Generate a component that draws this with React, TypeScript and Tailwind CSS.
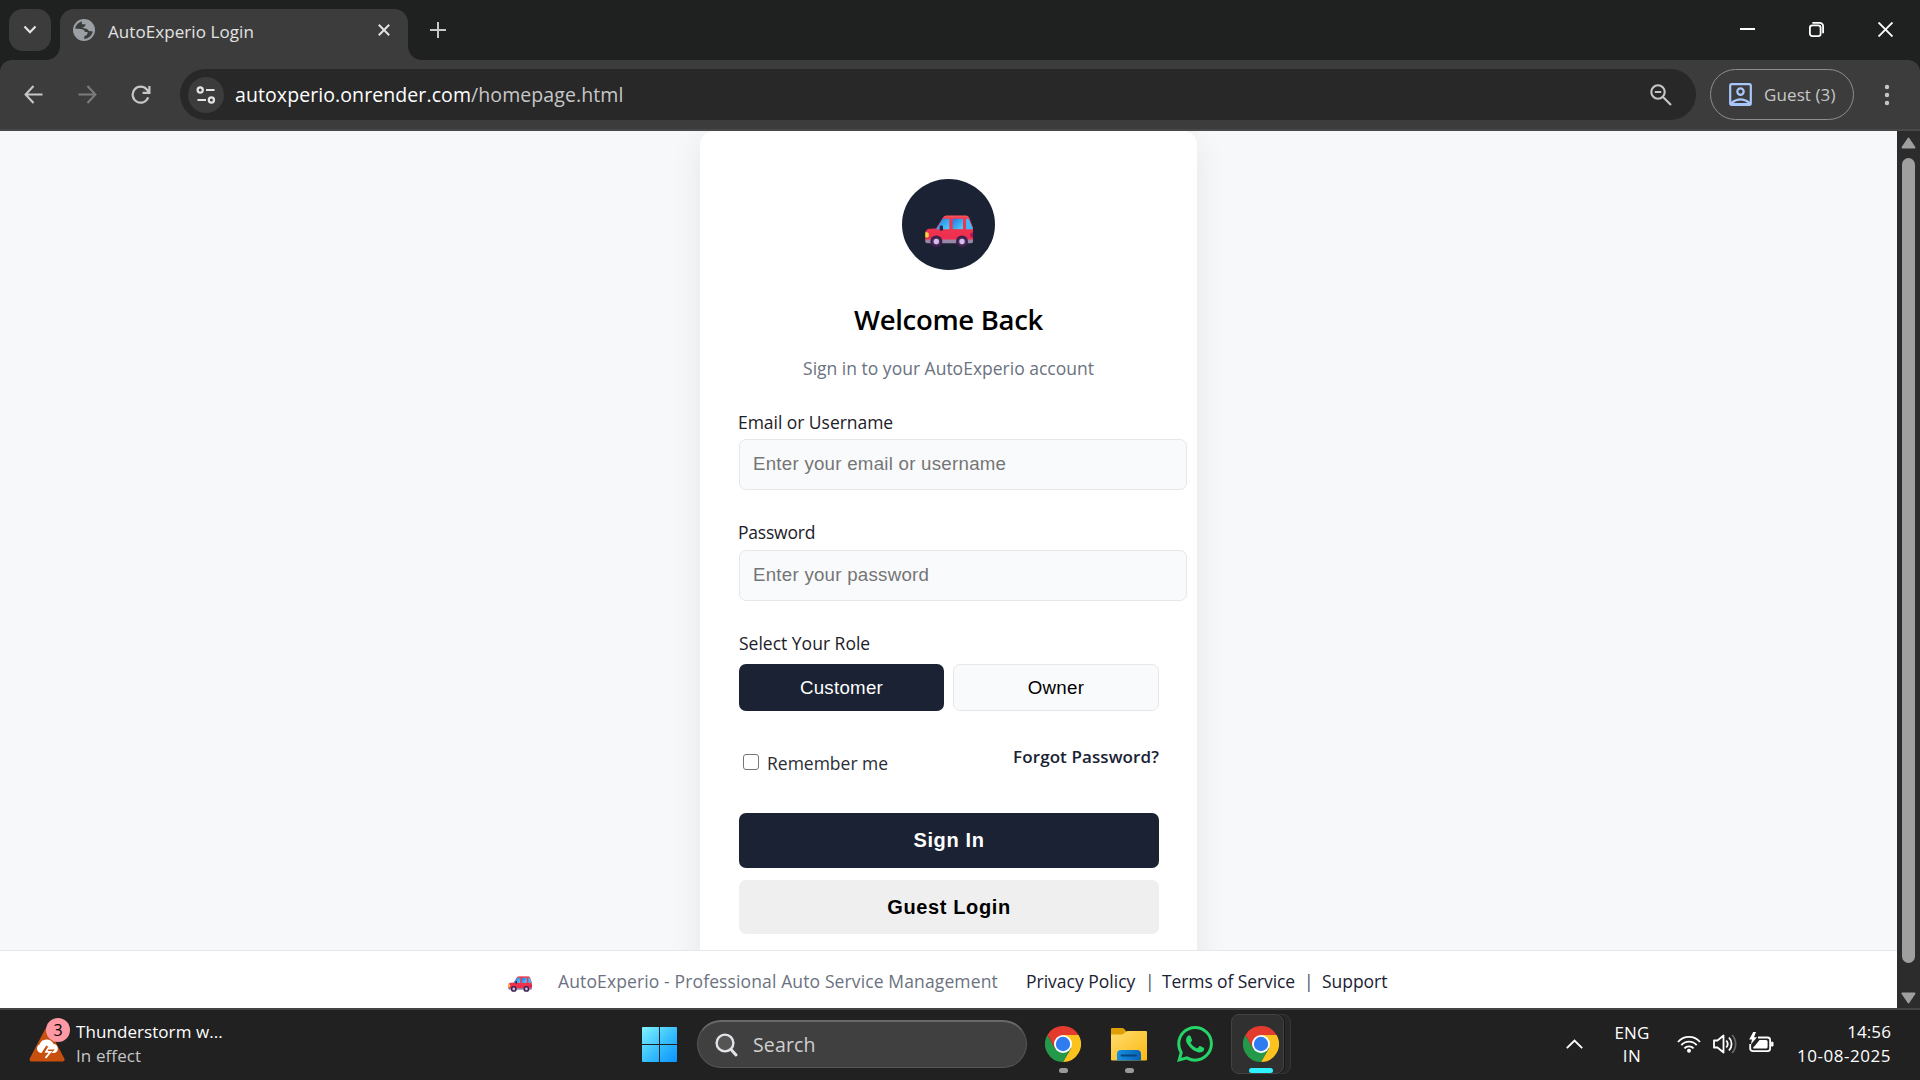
import React from 'react';

const SANS = "font-['Open_Sans','Noto_Sans',sans-serif]";
const ARIAL = "font-['Liberation_Sans',Arial,sans-serif]";

function Car({ className }: { className: string }) {
  return (
    <svg viewBox="0 0 144 98" className={className}>
      <defs>
        <linearGradient id="glass" x1="0" y1="0" x2="1" y2="1">
          <stop offset="0" stopColor="#2079e4" />
          <stop offset="1" stopColor="#52d2ff" />
        </linearGradient>
        <linearGradient id="paint" x1="0" y1="0" x2="0" y2="1">
          <stop offset="0" stopColor="#fb5a5e" />
          <stop offset="0.12" stopColor="#f0394e" />
          <stop offset="1" stopColor="#ee2c50" />
        </linearGradient>
      </defs>
      <path d="M64 1H122Q130 1 133 8L144 38V80H1V54Q1 43 13 41L33 40L54 7Q58 1 64 1Z" fill="url(#paint)" />
      <path d="M56 11H73V42H34L50 15Q52 11 56 11Z" fill="url(#glass)" />
      <path d="M83 11H114V42H83Z" fill="url(#glass)" />
      <path d="M123 11H129Q131 11 132 14L143 38V42H123Z" fill="#45b7f7" />
      <rect x="44" y="31" width="10" height="16" rx="4" fill="#2a2547" />
      <path d="M1 51H6Q12 52 12 59Q12 67 6 67H1Z" fill="#ffd83b" />
      <path d="M144 52H141Q135 54 135 60Q135 66 141 67H144Z" fill="#b3125f" />
      <path d="M1 73H144V80Q144 84 138 84H7Q1 84 1 78Z" fill="#9a86a8" />
      <circle cx="34" cy="79" r="18" fill="#3a1f49" />
      <circle cx="111" cy="79" r="18" fill="#3a1f49" />
      <circle cx="34" cy="79" r="12" fill="#4c355c" />
      <circle cx="111" cy="79" r="12" fill="#4c355c" />
      <circle cx="34" cy="79" r="8" fill="#d8bdee" />
      <circle cx="111" cy="79" r="8" fill="#d8bdee" />
    </svg>
  );
}

function Chrome() {
  return (
    <svg viewBox="0 0 48 48" className="block h-9 w-9">
      <path d="M24 24L3.2 12A24 24 0 0 1 44.8 12Z" fill="#e33b2e" />
      <path d="M24 12H44.8A24 24 0 0 1 24 48L34.4 30Z" fill="#fcc31e" />
      <path d="M13.6 30L3.2 12A24 24 0 0 0 24 48L34.4 30L24 30Z" fill="#25994a" />
      <path d="M3.2 12L13.6 30L24 24V12Z" fill="#e33b2e" />
      <circle cx="24" cy="24" r="12" fill="#fff" />
      <circle cx="24" cy="24" r="9.6" fill="#2f7cf0" />
    </svg>
  );
}

function TabStrip() {
  return (
    <div className="flex h-[60px] shrink-0 items-start bg-[#1f2120] pt-[9px]">
      <div className="ml-[9px] flex h-[42px] w-[42px] items-center justify-center rounded-[14px] bg-[#3c3c3c]">
        <svg width="14" height="10" viewBox="0 0 14 10" fill="none" stroke="#e3e3e3" strokeWidth="2.2"><path d="M1.5 1.5L7 7.2L12.5 1.5" /></svg>
      </div>
      <div className="relative ml-[9px] flex h-[51px] w-[348px] items-start rounded-t-[14px] bg-[#3c3c3c]">
        <svg className="absolute -left-[14px] bottom-0" width="14" height="14"><path d="M14 0V14H0A14 14 0 0 0 14 0Z" fill="#3c3c3c" /></svg>
        <svg className="absolute -right-[14px] bottom-0" width="14" height="14"><path d="M0 0V14H14A14 14 0 0 1 0 0Z" fill="#3c3c3c" /></svg>
        <svg className="mt-[10px] ml-[13px]" width="22" height="22" viewBox="0 0 22 22">
          <circle cx="11" cy="11" r="10" fill="#3c3c3c" stroke="#9aa0a6" strokeWidth="2" />
          <path d="M1.5 9.5L8 10Q11.5 10.5 12 13H14.5Q15 16.5 11.5 17L11 20.5A10 10 0 0 1 1.2 10Z" fill="#9aa0a6" />
          <path d="M9.5 1.2Q8 3.5 9.2 5.2H12.5Q12.5 8.2 9 8.4L11 9.3Q14.5 9.5 16 12L20.6 12.5A10 10 0 0 0 9.5 1.2Z" fill="#9aa0a6" />
        </svg>
        <span className={`${SANS} mt-[11px] ml-[13px] w-[270px] shrink-0 text-[17px] leading-6 tracking-[0.07px] whitespace-nowrap text-[#e3e3e3]`}>AutoExperio Login</span>
        <svg className="mt-[15px] shrink-0" width="12" height="12" viewBox="0 0 12 12" stroke="#e3e3e3" strokeWidth="2"><path d="M0.8 0.8L11.2 11.2M11.2 0.8L0.8 11.2" /></svg>
      </div>
      <svg className="mt-[13px] ml-[22px]" width="16" height="16" viewBox="0 0 16 16" stroke="#c7c7c7" strokeWidth="2"><path d="M8 0V16M0 8H16" /></svg>
      <div className="mt-[13px] mr-[27px] ml-auto flex gap-[54px]">
        <svg width="15" height="15" stroke="#fff" strokeWidth="2"><path d="M0 7H15" /></svg>
        <svg width="15" height="15" viewBox="0 0 15 15" fill="none" stroke="#fff" strokeWidth="1.8"><rect x="0.9" y="3.4" width="10.7" height="10.7" rx="2.4" /><path d="M3.4 0.9H10.4Q14.1 0.9 14.1 4.6V11.2" /></svg>
        <svg width="15" height="15" viewBox="0 0 15 15" stroke="#fff" strokeWidth="1.9"><path d="M0.5 0.5L14.5 14.5M14.5 0.5L0.5 14.5" /></svg>
      </div>
    </div>
  );
}

function Toolbar() {
  return (
    <div className="h-[71px] shrink-0 bg-[#1f2120]">
      <div className="flex h-[71px] items-start rounded-t-[12px] border-b-2 border-[#484848] bg-[#3c3c3c] pt-[9px]">
        <div className="flex h-[51px] items-center">
          <svg className="ml-6" width="19" height="19" viewBox="0 0 19 19" fill="none" stroke="#c7c7c7" strokeWidth="2.1"><path d="M9.5 1L1.6 9.5L9.5 18M1.6 9.5H18.5" /></svg>
          <svg className="ml-[35px]" width="19" height="19" viewBox="0 0 19 19" fill="none" stroke="#7b7b7b" strokeWidth="2.1"><path d="M9.5 1L17.4 9.5L9.5 18M17.4 9.5H0.5" /></svg>
          <svg className="ml-[34px]" width="20" height="20" viewBox="0 0 20 20" fill="none" stroke="#c7c7c7" strokeWidth="2.2"><path d="M17.2 12.4A8 8 0 1 1 15.8 4.5L18 7M18.4 1V7.8H11.6" /></svg>
        </div>
        <div className="ml-[29px] flex h-[51px] w-[1516px] items-center rounded-full bg-[#282828]">
          <div className="ml-2 flex h-9 w-9 items-center justify-center rounded-full bg-[#3c3c3c]">
            <svg width="20" height="18" viewBox="0 0 20 18" fill="none" stroke="#e3e3e3" strokeWidth="2.2"><circle cx="4.2" cy="4" r="2.6" /><path d="M10 4H18.5M1.5 14H10" /><circle cx="15.4" cy="14" r="2.6" /></svg>
          </div>
          <span className={`${SANS} ml-[11px] text-[19.5px] leading-[30px] tracking-[0.089px] whitespace-nowrap text-[#c7c7c7]`}><span className="text-white">autoxperio.onrender.com</span>/homepage.html</span>
          <svg className="mr-6 ml-auto" width="22" height="22" viewBox="0 0 22 22" fill="none" stroke="#c7c7c7" strokeWidth="2.1"><circle cx="8" cy="8" r="6.7" /><path d="M13 13L21 21M4.8 8H11.2" /></svg>
        </div>
        <div className="ml-[14px] flex h-[51px] w-[144px] items-center rounded-full border border-[#8e8e8e]">
          <svg className="ml-[18px]" width="23" height="23" viewBox="0 0 23 23" fill="none" stroke="#a8c7fa" strokeWidth="2.2"><rect x="1.2" y="1.2" width="20.6" height="20.6" rx="1.5" /><circle cx="11.5" cy="8.6" r="3.2" /><path d="M2.5 19.8Q11.5 12.8 20.5 19.8V21H2.5Z" /></svg>
          <span className={`${SANS} ml-3 text-[17px] leading-6 tracking-[0.1px] whitespace-nowrap text-[#c7c7c7]`}>Guest (3)</span>
        </div>
        <svg className="mt-[14px] ml-[30px]" width="6" height="24" fill="#c7c7c7"><circle cx="3" cy="4" r="2.2" /><circle cx="3" cy="12" r="2.2" /><circle cx="3" cy="20" r="2.2" /></svg>
      </div>
    </div>
  );
}

function Field({ placeholder, type }: { placeholder: string; type: string }) {
  return (
    <input type={type} placeholder={placeholder} className={`${ARIAL} block h-[51px] w-[448px] rounded-[7px] border border-[#e5e7eb] bg-[#f9fafc] px-[13px] pb-px text-[18.7px] tracking-[0.253px] placeholder:text-[#757575]`} />
  );
}

function LoginCard() {
  const label = `${SANS} -ml-px block h-6 text-[17.5px] leading-6 whitespace-nowrap text-[#1c2028]`;
  return (
    <div className="mx-auto flex h-[900px] w-[497px] flex-col rounded-[14px] bg-white px-[39px] pt-12 shadow-[0_8px_32px_rgba(0,0,0,0.08)]">
      <div className="mx-auto flex h-[91px] w-[93px] shrink-0 items-start justify-center rounded-[50%] bg-[#1a2233]">
        <Car className="mt-9 h-[33px] w-12" />
      </div>
      <h1 className={`${SANS} mt-[30px] h-10 text-center text-[27.5px] leading-10 font-semibold tracking-[-0.3px] whitespace-nowrap text-black`}>Welcome Back</h1>
      <p className={`${SANS} mt-4 h-6 text-center text-[17.5px] leading-6 whitespace-nowrap text-[#6b7280]`}>Sign in to your AutoExperio account</p>
      <label className={`${label} mt-[30px] mb-[5px] tracking-[-0.043px]`}>Email or Username</label>
      <Field type="text" placeholder="Enter your email or username" />
      <label className={`${label} mt-[30px] mb-1.5 tracking-[-0.21px]`}>Password</label>
      <Field type="password" placeholder="Enter your password" />
      <label className={`${label} mt-[30px] mb-[9px] pl-px`}>Select Your Role</label>
      <div className={`${ARIAL} flex w-[420px] shrink-0 gap-[9px] text-[18.7px] tracking-[0.28px]`}>
        <button className="h-[47px] w-[205px] rounded-[7px] bg-[#1a2233] pt-0.5 text-white">Customer</button>
        <button className="h-[47px] w-[206px] rounded-[7px] border border-[#e5e7eb] bg-[#f9fafc] pt-0.5 text-black">Owner</button>
      </div>
      <div className={`${SANS} mt-[34px] flex h-[30px] w-[420px] items-start justify-between whitespace-nowrap`}>
        <label className="mt-1.5 flex h-6 items-start text-[17.5px] leading-6 text-[#2a2d35]">
          <input type="checkbox" className="mt-[3px] mr-2 ml-1 h-4 w-4 appearance-none rounded-[3px] border border-[#767676] bg-white" />
          Remember me
        </label>
        <a className="h-6 text-[17px] leading-6 font-semibold tracking-[0.09px] text-[#1a2233]">Forgot Password?</a>
      </div>
      <button className={`${ARIAL} mt-[38px] h-[55px] w-[420px] shrink-0 rounded-[7px] bg-[#1a2233] pb-0.5 text-[20px] font-bold tracking-[0.62px] text-white`}>Sign In</button>
      <button className={`${ARIAL} mt-3 h-[54px] w-[420px] shrink-0 rounded-[7px] bg-[#efefef] text-[20px] font-bold tracking-[0.62px] text-black`}>Guest Login</button>
    </div>
  );
}

function Footer() {
  return (
    <footer className={`${SANS} flex h-[58px] shrink-0 items-center border-t border-[#e5e7eb] bg-white pt-[3px] text-[17.5px] leading-6 whitespace-nowrap text-[#1a2233]`}>
      <Car className="mt-[5px] ml-[508px] h-4 w-6 shrink-0" />
      <span className="ml-[26px] w-[468px] tracking-[0.125px] text-[#6b7280]">AutoExperio - Professional Auto Service Management</span>
      <a className="w-[119px]">Privacy Policy</a>
      <span className="w-[17px] text-[#4b5163]">|</span>
      <a className="w-[142px] tracking-[-0.1px]">Terms of Service</a>
      <span className="w-[18px] text-[#4b5163]">|</span>
      <a className="tracking-[-0.03px]">Support</a>
    </footer>
  );
}

function Scrollbar() {
  return (
    <div className="flex w-[23px] shrink-0 flex-col items-center bg-[#2c2c2c] pt-1.5 pr-px pb-1">
      <svg width="15" height="12" viewBox="0 0 15 12"><path d="M7.5 1.5L13.6 10.5H1.4Z" fill="#9f9f9f" stroke="#9f9f9f" strokeWidth="1.8" strokeLinejoin="round" /></svg>
      <div className="mt-[9px] h-[805px] w-[13px] rounded-full bg-[#9f9f9f]" />
      <svg className="mt-auto" width="15" height="12" viewBox="0 0 15 12"><path d="M7.5 10.5L13.6 1.5H1.4Z" fill="#9f9f9f" stroke="#9f9f9f" strokeWidth="1.8" strokeLinejoin="round" /></svg>
    </div>
  );
}

function Taskbar() {
  return (
    <div className={`${SANS} flex h-[72px] shrink-0 items-center border-t-2 border-[#444] bg-[#212121] pb-0.5 whitespace-nowrap`}>
      <div className="flex w-[642px] shrink-0 items-center">
        <div className="relative ml-[29px] h-[46px] w-[42px]">
          <svg className="absolute top-1.5" width="36" height="36" viewBox="0 0 36 36">
            <path d="M18 3L33.5 32.5H2.5Z" fill="#c7500f" stroke="#c7500f" strokeWidth="4" strokeLinejoin="round" />
            <path d="M12 26A4.5 4.5 0 0 1 10.5 17.5A7.5 7.5 0 0 1 24.5 17A4.6 4.6 0 0 1 25.5 26Z" fill="#fff" />
            <path d="M19 19.5L15.8 24.5H21L16.5 29" fill="none" stroke="#c7500f" strokeWidth="4" />
            <path d="M20 20L17 24.8H21.5L16.5 31" fill="none" stroke="#fff" strokeWidth="1.8" />
          </svg>
          <div className="absolute -top-[3px] left-[17px] flex h-6 w-6 items-center justify-center rounded-full bg-[#ff99a4] text-[16px] leading-6 text-black">3</div>
        </div>
        <div className="ml-[5px] text-[17px] leading-6">
          <div className="tracking-[0.07px] text-white">Thunderstorm w...</div>
          <div className="tracking-[0.1px] text-[#c5c5c5]">In effect</div>
        </div>
      </div>
      <svg width="35" height="35" viewBox="0 0 35 35">
        <defs><linearGradient id="win" gradientUnits="userSpaceOnUse" x1="0" y1="0" x2="35" y2="35"><stop offset="0" stopColor="#80f4ff" /><stop offset="0.55" stopColor="#35bdfc" /><stop offset="1" stopColor="#0a93ff" /></linearGradient></defs>
        <path d="M1 0H17V17H0V1Q0 0 1 0ZM18 0H34Q35 0 35 1V17H18ZM0 18H17V35H1Q0 35 0 34ZM18 18H35V34Q35 35 34 35H18Z" fill="url(#win)" />
      </svg>
      <div className="ml-5 flex h-12 w-[330px] items-center rounded-full border border-t-2 border-[#555] border-t-[#696969] bg-[#404040]">
        <svg className="ml-[17px]" width="23" height="24" viewBox="0 0 23 24" fill="none" stroke="#e2e2e8" strokeWidth="2.4" strokeLinecap="round"><circle cx="10" cy="10" r="8.4" fill="#555" /><path d="M16 16.5L21 22" strokeWidth="3" /></svg>
        <span className="ml-[15px] text-[19.5px] leading-7 tracking-[0.15px] text-[#d0d0d0]">Search</span>
      </div>
      <div className="relative ml-[18px]">
        <Chrome />
        <div className="absolute top-[42px] left-[14px] h-[5px] w-[9px] rounded-full bg-[#9a9a9a]" />
      </div>
      <div className="relative ml-[30px]">
        <svg className="block" width="36" height="36" viewBox="0 0 36 36">
          <defs>
            <linearGradient id="fold" x1="0" y1="0" x2="1" y2="1"><stop offset="0" stopColor="#ffdc6e" /><stop offset="1" stopColor="#fbb915" /></linearGradient>
            <linearGradient id="tray" x1="0" y1="0" x2="1" y2="0"><stop offset="0" stopColor="#168fe0" /><stop offset="1" stopColor="#0863b8" /></linearGradient>
          </defs>
          <path d="M0 3Q0 2 1 2H11Q12.5 2 13.5 3.2L15 5V12H0Z" fill="#e09f05" />
          <path d="M0 8.5H10.5Q12 8.5 13.5 7L14.5 6Q15.5 5 17 5H35Q36 5 36 6V33.5Q36 34.5 35 34.5H1Q0 34.5 0 33.5Z" fill="url(#fold)" />
          <path d="M6 28Q6 24 10 24H26Q30 24 30 28V34.5H6Z" fill="url(#tray)" />
          <path d="M10.5 29.5H25" stroke="#08457f" strokeWidth="1.8" strokeLinecap="round" />
        </svg>
        <div className="absolute top-[42px] left-[14px] h-[5px] w-[9px] rounded-full bg-[#9a9a9a]" />
      </div>
      <svg className="ml-[30px]" width="36" height="36" viewBox="0 0 24 24" fill="#25d366">
        <path d="M17.472 14.382c-.297-.149-1.758-.867-2.03-.967-.273-.099-.471-.148-.67.15-.197.297-.767.966-.94 1.164-.173.199-.347.223-.644.075-.297-.15-1.255-.463-2.39-1.475-.883-.788-1.48-1.761-1.653-2.059-.173-.297-.018-.458.13-.606.134-.133.298-.347.446-.52.149-.174.198-.298.298-.497.099-.198.05-.371-.025-.52-.075-.149-.669-1.612-.916-2.207-.242-.579-.487-.5-.669-.51-.173-.008-.371-.01-.57-.01-.198 0-.52.074-.792.372-.272.297-1.04 1.016-1.04 2.479 0 1.462 1.065 2.875 1.213 3.074.149.198 2.096 3.2 5.077 4.487.709.306 1.262.489 1.694.625.712.227 1.36.195 1.871.118.571-.085 1.758-.719 2.006-1.413.248-.694.248-1.289.173-1.413-.074-.124-.272-.198-.57-.347m-5.421 7.403h-.004a9.87 9.87 0 01-5.031-1.378l-.361-.214-3.741.982.998-3.648-.235-.374a9.86 9.86 0 01-1.51-5.26c.001-5.45 4.436-9.884 9.888-9.884 2.64 0 5.122 1.03 6.988 2.898a9.825 9.825 0 012.893 6.994c-.003 5.45-4.437 9.884-9.885 9.884m8.413-18.297A11.815 11.815 0 0012.05 0C5.495 0 .16 5.335.157 11.892c0 2.096.547 4.142 1.588 5.945L.057 24l6.305-1.654a11.882 11.882 0 005.683 1.448h.005c6.554 0 11.89-5.335 11.893-11.893a11.821 11.821 0 00-3.48-8.413z" />
      </svg>
      <div className="ml-[18px] flex h-[60px] w-[60px] rounded-lg border border-[#363636] bg-[#282828]">
        <div className="relative -mt-px -ml-px h-[60px] w-[53px] rounded-lg border border-[#434343] bg-[#303030] pt-[11px] pl-[11px] shadow-[1px_0_0_#181818]">
          <Chrome />
          <div className="absolute top-[53px] left-[17px] h-[5px] w-6 rounded-full bg-[#2ff0ff]" />
        </div>
      </div>
      <div className="mr-[29px] ml-auto flex items-center text-white">
        <svg width="17" height="10" viewBox="0 0 17 10" fill="none" stroke="#fff" strokeWidth="1.9"><path d="M0.8 9.2L8.5 1.5L16.2 9.2" /></svg>
        <div className="ml-[31px] w-[36px] text-center text-[17px] leading-[23px]">
          <div className="tracking-[0.17px]">ENG</div>
          <div className="tracking-[0.5px]">IN</div>
        </div>
        <svg className="ml-[27px]" width="24" height="20" viewBox="0 0 24 20" fill="none" stroke="#fff" strokeWidth="1.8">
          <path d="M1 8A14.5 14.5 0 0 1 23 8M4.3 11.2A10.2 10.2 0 0 1 19.7 11.2M7.4 14.4A6.2 6.2 0 0 1 16.6 14.4" />
          <circle cx="12" cy="16.8" r="2" fill="#fff" stroke="none" />
        </svg>
        <svg className="ml-3" width="25" height="20" viewBox="0 0 25 20" fill="none" stroke="#fff" strokeWidth="1.8" strokeLinejoin="round">
          <path d="M1 6.5H4.5L10.5 1.5V18.5L4.5 13.5H1Z" />
          <path d="M13.3 6.5A5.5 5.5 0 0 1 13.3 13.5M16 3.5A9.5 9.5 0 0 1 16 16.5" />
          <path d="M19 1A13 13 0 0 1 19 19" stroke="#666" />
        </svg>
        <svg className="-mt-[3px] ml-[11px]" width="25" height="21" viewBox="0 0 25 21" fill="none" stroke="#fff" strokeWidth="1.8">
          <path d="M9 5.5H18.5Q21.1 5.5 21.1 8V16.5Q21.1 19.1 18.5 19.1H4Q1.2 19.1 1.2 16.5V12" />
          <path d="M10.5 8H17Q18.6 8 18.6 9.5V15Q18.6 16.6 17 16.6H4.8Q4 16.6 4 15.8L6.5 13Z" fill="#fff" stroke="none" />
          <path d="M22.2 10.2H24V14H22.2Z" fill="#fff" strokeWidth="1" />
          <path d="M4.2 0L0.2 7.5H3L1.8 12.5L8 5.2H5L7 0Z" fill="#fff" stroke="none" />
        </svg>
        <div className="ml-[23px] w-[94px] text-right text-[17px] leading-6">
          <div className="tracking-[0.093px]">14:56</div>
          <div className="tracking-[0.54px]">10-08-2025</div>
        </div>
      </div>
    </div>
  );
}

export default function App() {
  return (
    <div className="flex h-[1080px] w-[1920px] flex-col overflow-hidden bg-[#1f2120]">
      <TabStrip />
      <Toolbar />
      <div className="flex h-[877px] shrink-0">
        <div className="flex w-[1897px] flex-col bg-[#f7f8fa]">
          <div className="h-[819px] shrink-0 overflow-hidden">
            <LoginCard />
          </div>
          <Footer />
        </div>
        <Scrollbar />
      </div>
      <Taskbar />
    </div>
  );
}
